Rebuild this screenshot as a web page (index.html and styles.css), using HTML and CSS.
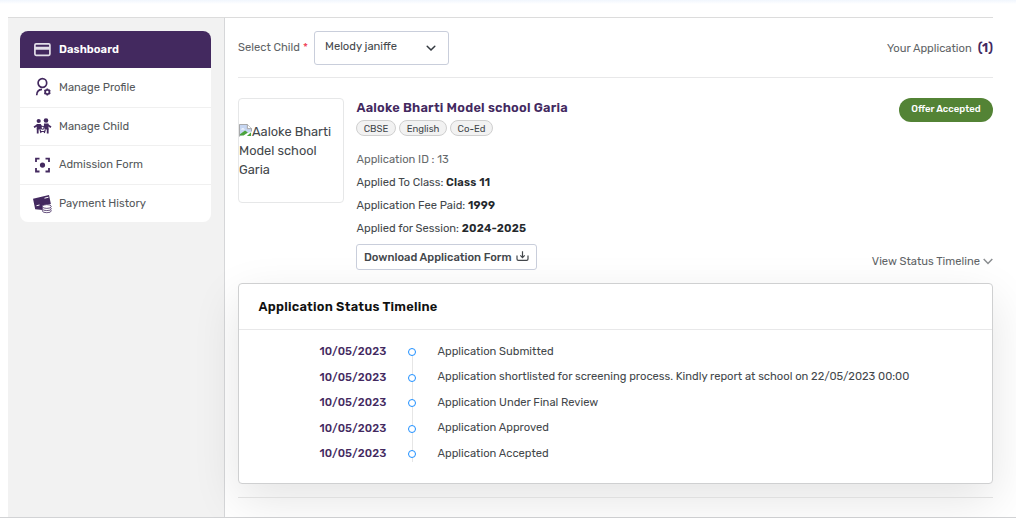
FILE: index.html
```html
<!DOCTYPE html>
<html lang="en">
<head>
<meta charset="utf-8">
<title>Dashboard</title>
<link rel="stylesheet" href="styles.css">
</head>
<body>
<div class="page">
  <aside class="sidebar">
    <nav class="menu">
      <a class="item active"><svg class="icon" viewBox="0 0 20 20"><rect x="2.900" y="3.900" width="15" height="11.400" rx="1.200" fill="none" stroke="#e3dfe9" stroke-width="1.700"/><path d="M3 8.200h14.500" stroke="#e3dfe9" stroke-width="3"/></svg><span>Dashboard</span></a>
      <a class="item"><svg class="icon" viewBox="0 0 20 20" fill="none" stroke="#43295f" stroke-width="1.700"><circle cx="10.400" cy="6" r="4.300"/><path d="M4.700 18.300c0-3.700 2.300-5.700 5.300-5.900"/><circle cx="15.300" cy="14.900" r="2.100"/><path d="M15.300 11.400v1.400M15.300 17v1.400M12.300 13.150l1.200.7M17.100 15.950l1.200.7M12.300 16.650l1.200-.7M17.100 13.850l1.200-.7"/></svg><span>Manage Profile</span></a>
      <a class="item"><svg class="icon" viewBox="0 0 20 20" fill="none" stroke="#43295f" stroke-width="1.800"><g fill="#43295f" stroke="none"><circle cx="6.700" cy="5" r="2.100"/><circle cx="14" cy="4.500" r="2.300"/><path d="M4.700 8h4l1.300 2-1.500 3.500H4.700zM12 7.600h4.500v5.800H13l-1.200-3z"/></g><path d="M6 8.900L2 11.200M15 8.500l4 2.700M5.700 12.500v5M15.700 12.500v5"/><circle cx="10.600" cy="11.700" r="1.500" stroke-width="1.100" fill="#fff"/><path d="M8 13.500l1 3.500M13.300 13.500l-1 3.500M9 15.500h3.300" stroke-width="1.200"/></svg><span>Manage Child</span></a>
      <a class="item"><svg class="icon" viewBox="0 0 20 20" fill="none" stroke="#43295f" stroke-width="1.800"><path d="M4 7V3.700h3.500M13.500 3.700H17V7M17 13v3.500h-3.500M7.500 16.500H4V13"/><circle cx="10.500" cy="10.100" r="2.600" fill="#43295f" stroke="none"/></svg><span>Admission Form</span></a>
      <a class="item"><svg class="icon" viewBox="0 0 20 20"><path d="M1 4.800L17 .9l1.900 9-6 1-2.300 5-7.400-.6z" fill="#43295f"/><path d="M12.500 4.200l4-1M4.500 11.700l3-.7" stroke="#fff" stroke-width="1"/><g fill="#fff" stroke="#43295f" stroke-width=".8"><ellipse cx="14.800" cy="16.800" rx="4.500" ry="1.900"/><ellipse cx="14.800" cy="14.700" rx="4.500" ry="1.900"/><ellipse cx="14.800" cy="12.500" rx="4.500" ry="1.900"/></g></svg><span>Payment History</span></a>
    </nav>
  </aside>
  <main class="main">
    <header class="bar">
      <span class="lbl">Select Child <i class="req">*</i></span>
      <div class="select"><span>Melody janiffe</span><svg width="10" height="7" viewBox="0 0 10 7"><path d="M1.200 1.200L5 5l3.800-3.800" fill="none" stroke="#343a40" stroke-width="1.500" stroke-linecap="round"/></svg></div>
      <span class="yours">Your Application</span><b class="count">(1)</b>
    </header>
    <section class="app">
      <div class="logo"><svg class="broken" width="13" height="13" viewBox="0 0 14 14"><path d="M.5 13.500V.5H9L13.500 5v3" fill="#c6d6f2" stroke="#a0a0a0"/><path d="M9 .5V5h4.500" fill="#fff" stroke="#a0a0a0"/><path d="M2 6q2-3 4.500 0z" fill="#fff"/><path d="M1 12.500V11L6.500 7l3 2.200L5 12.500z" fill="#4aa33c"/><path d="M8.500 13h4.500V9z" fill="#4aa33c"/></svg><span>Aaloke Bharti Model school Garia</span></div>
      <div class="info">
        <h1 class="name">Aaloke Bharti Model school Garia</h1>
        <div class="tags"><span class="tag t1">CBSE</span><span class="tag t2">English</span><span class="tag t3">Co-Ed</span></div>
        <p class="row r1 muted">Application ID : 13</p>
        <p class="row">Applied To Class: <b>Class 11</b></p>
        <p class="row">Application Fee Paid: <b>1999</b></p>
        <p class="row">Applied for Session: <b>2024-2025</b></p>
        <button class="download"><span>Download Application Form</span><svg width="13" height="12" viewBox="0 0 13 12" fill="none" stroke="#43474b" stroke-width="1.200"><path d="M1 4.500V8q0 1.300 1.300 1.300h8.400Q12 9.300 12 8V4.500M6.500.3v6M4.300 4.400l2.200 2.200 2.200-2.200"/></svg></button>
      </div>
      <div class="side">
        <span class="badge">Offer Accepted</span>
        <span class="view"><span>View Status Timeline</span><svg width="10" height="7" viewBox="0 0 10 7"><path d="M.7.9L5 5.500 9.300.9" fill="none" stroke="#8a8d90" stroke-width="1.500"/></svg></span>
      </div>
    </section>
    <section class="card">
      <h2 class="title">Application Status Timeline</h2>
      <ul class="steps">
        <li><b>10/05/2023</b><i class="dot"></i><span>Application Submitted</span></li>
        <li><b>10/05/2023</b><i class="dot"></i><span>Application shortlisted for screening process. Kindly report at school on 22/05/2023 00:00</span></li>
        <li><b>10/05/2023</b><i class="dot"></i><span>Application Under Final Review</span></li>
        <li><b>10/05/2023</b><i class="dot"></i><span>Application Approved</span></li>
        <li><b>10/05/2023</b><i class="dot"></i><span>Application Accepted</span></li>
      </ul>
    </section>
    <div class="rule"></div>
  </main>
</div>
</body>
</html>
```

FILE: styles.css
```css
* { box-sizing: border-box; margin: 0; padding: 0; }
body { height: 518px; overflow: hidden; background: #fff; color: #43474b; font: 11.2px/19px Rubik, Roboto, sans-serif; white-space: nowrap; }
.page { display: flex; height: 518px; padding: 17px 23px 0 8px; border-bottom: 1px solid #d2d3d5; background: linear-gradient(#f1f6fd, #fff 4px); }
.sidebar { flex: none; width: 217px; padding: 13px 13px 0 12px; background: #f2f2f2; border-top: 1px solid #dcdcdc; border-right: 1px solid #d6d7d9; }
.menu { border-radius: 8px; overflow: hidden; background: #fff; height: 191px; }
.item { display: flex; align-items: center; height: 38.5px; padding-left: 12px; gap: 7px; border-bottom: 1px solid #f0f0f0; color: #55585b; }
.item:nth-child(2) { height: 39.5px; }
.item:last-child { border: 0; }
.icon { width: 20px; height: 20px; flex: none; }
.active { height: 37px; background: #43295f; color: #fff; font-weight: 600; letter-spacing: .05px; border: 0; }
.main { flex: 1; min-width: 0; padding-left: 13px; border-top: 1px solid #dcdcdc; }
.bar { display: flex; align-items: center; height: 60px; border-bottom: 1px solid #e8e8e9; color: #606366; }
.lbl { width: 76px; }
.req { color: #f04055; font-style: normal; margin-left: .5px; }
.select { display: flex; justify-content: space-between; width: 135px; height: 34px; padding: 5px 12px 0 10px; border: 1px solid #c9cedb; border-radius: 3px; color: #43474b; }
.select svg { margin-top: 8px; }
.yours { margin-left: auto; margin-right: 6px; padding-top: 1px; }
.count { color: #43295f; font-size: 12.8px; font-weight: 600; }
.app { display: flex; height: 205px; padding-top: 20px; }
.logo { width: 106px; height: 105px; padding-top: 23px; border: 1px solid #e6e7e8; border-radius: 4px; font-size: 12.8px; white-space: normal; }
.broken { vertical-align: -1px; }
.info { margin-left: 12.5px; }
.name { color: #43295f; font-size: 12.8px; line-height: 19px; font-weight: 600; letter-spacing: .22px; }
.tags { display: flex; gap: 3px; margin: 3px 0 20px -.5px; }
.tag { height: 16px; border: 1px solid #cfcfcf; border-radius: 8px; background: #f2f2f2; font-size: 9.6px; line-height: 15px; text-align: center; }
.t1 { width: 40px; }
.t2 { width: 48px; }
.t3 { width: 43px; }
.row { height: 23px; line-height: 23px; }
.r1 { margin-top: -8px; }
.row b { color: #24282c; font-weight: 600; letter-spacing: .2px; }
.muted { color: #66696c; }
.download { display: flex; align-items: center; gap: 4px; width: 181px; height: 26px; margin: 4px 0 0 -.5px; padding: 0 7px; border: 1px solid #c9cedb; border-radius: 3px; background: #fff; color: #43474b; font: 500 11.2px/19px Rubik, Roboto, sans-serif; }
.side { display: flex; flex-direction: column; align-items: flex-end; justify-content: space-between; margin-left: auto; padding-bottom: 12px; }
.badge { width: 94px; height: 24px; border-radius: 12px; background: #538335; color: #fff; font-size: 9.6px; font-weight: 500; line-height: 22px; text-align: center; }
.view { display: flex; align-items: center; gap: 3px; color: #606366; }
.card { height: 201px; border: 1px solid #cfd0d1; border-radius: 4px; background: #fff; box-shadow: 0 16px 48px rgba(0, 0, 0, .11); }
.title { height: 46px; padding-left: 19.5px; border-bottom: 1px solid #e8e8e9; color: #111; font-size: 12.8px; line-height: 45px; font-weight: 600; letter-spacing: .25px; }
.steps { list-style: none; padding: 9px 0 0 80.5px; }
.steps li { display: flex; align-items: center; height: 25.5px; }
.steps b { width: 88px; padding-top: .4px; color: #43295f; font-weight: 500; letter-spacing: .14px; }
.steps span { padding-bottom: .8px; }
.dot { position: relative; width: 8px; height: 8px; margin: 1px 22px 0 0; border: 1.5px solid #1e8fff; border-radius: 50%; background: #fff; }
.dot::after { content: ""; position: absolute; left: 3px; top: 7px; width: 1px; height: 18px; background: #e6e6e6; }
li:last-child .dot::after { height: 4px; }
.rule { height: 1px; margin-top: 13px; background: #dfdfdf; }
```
